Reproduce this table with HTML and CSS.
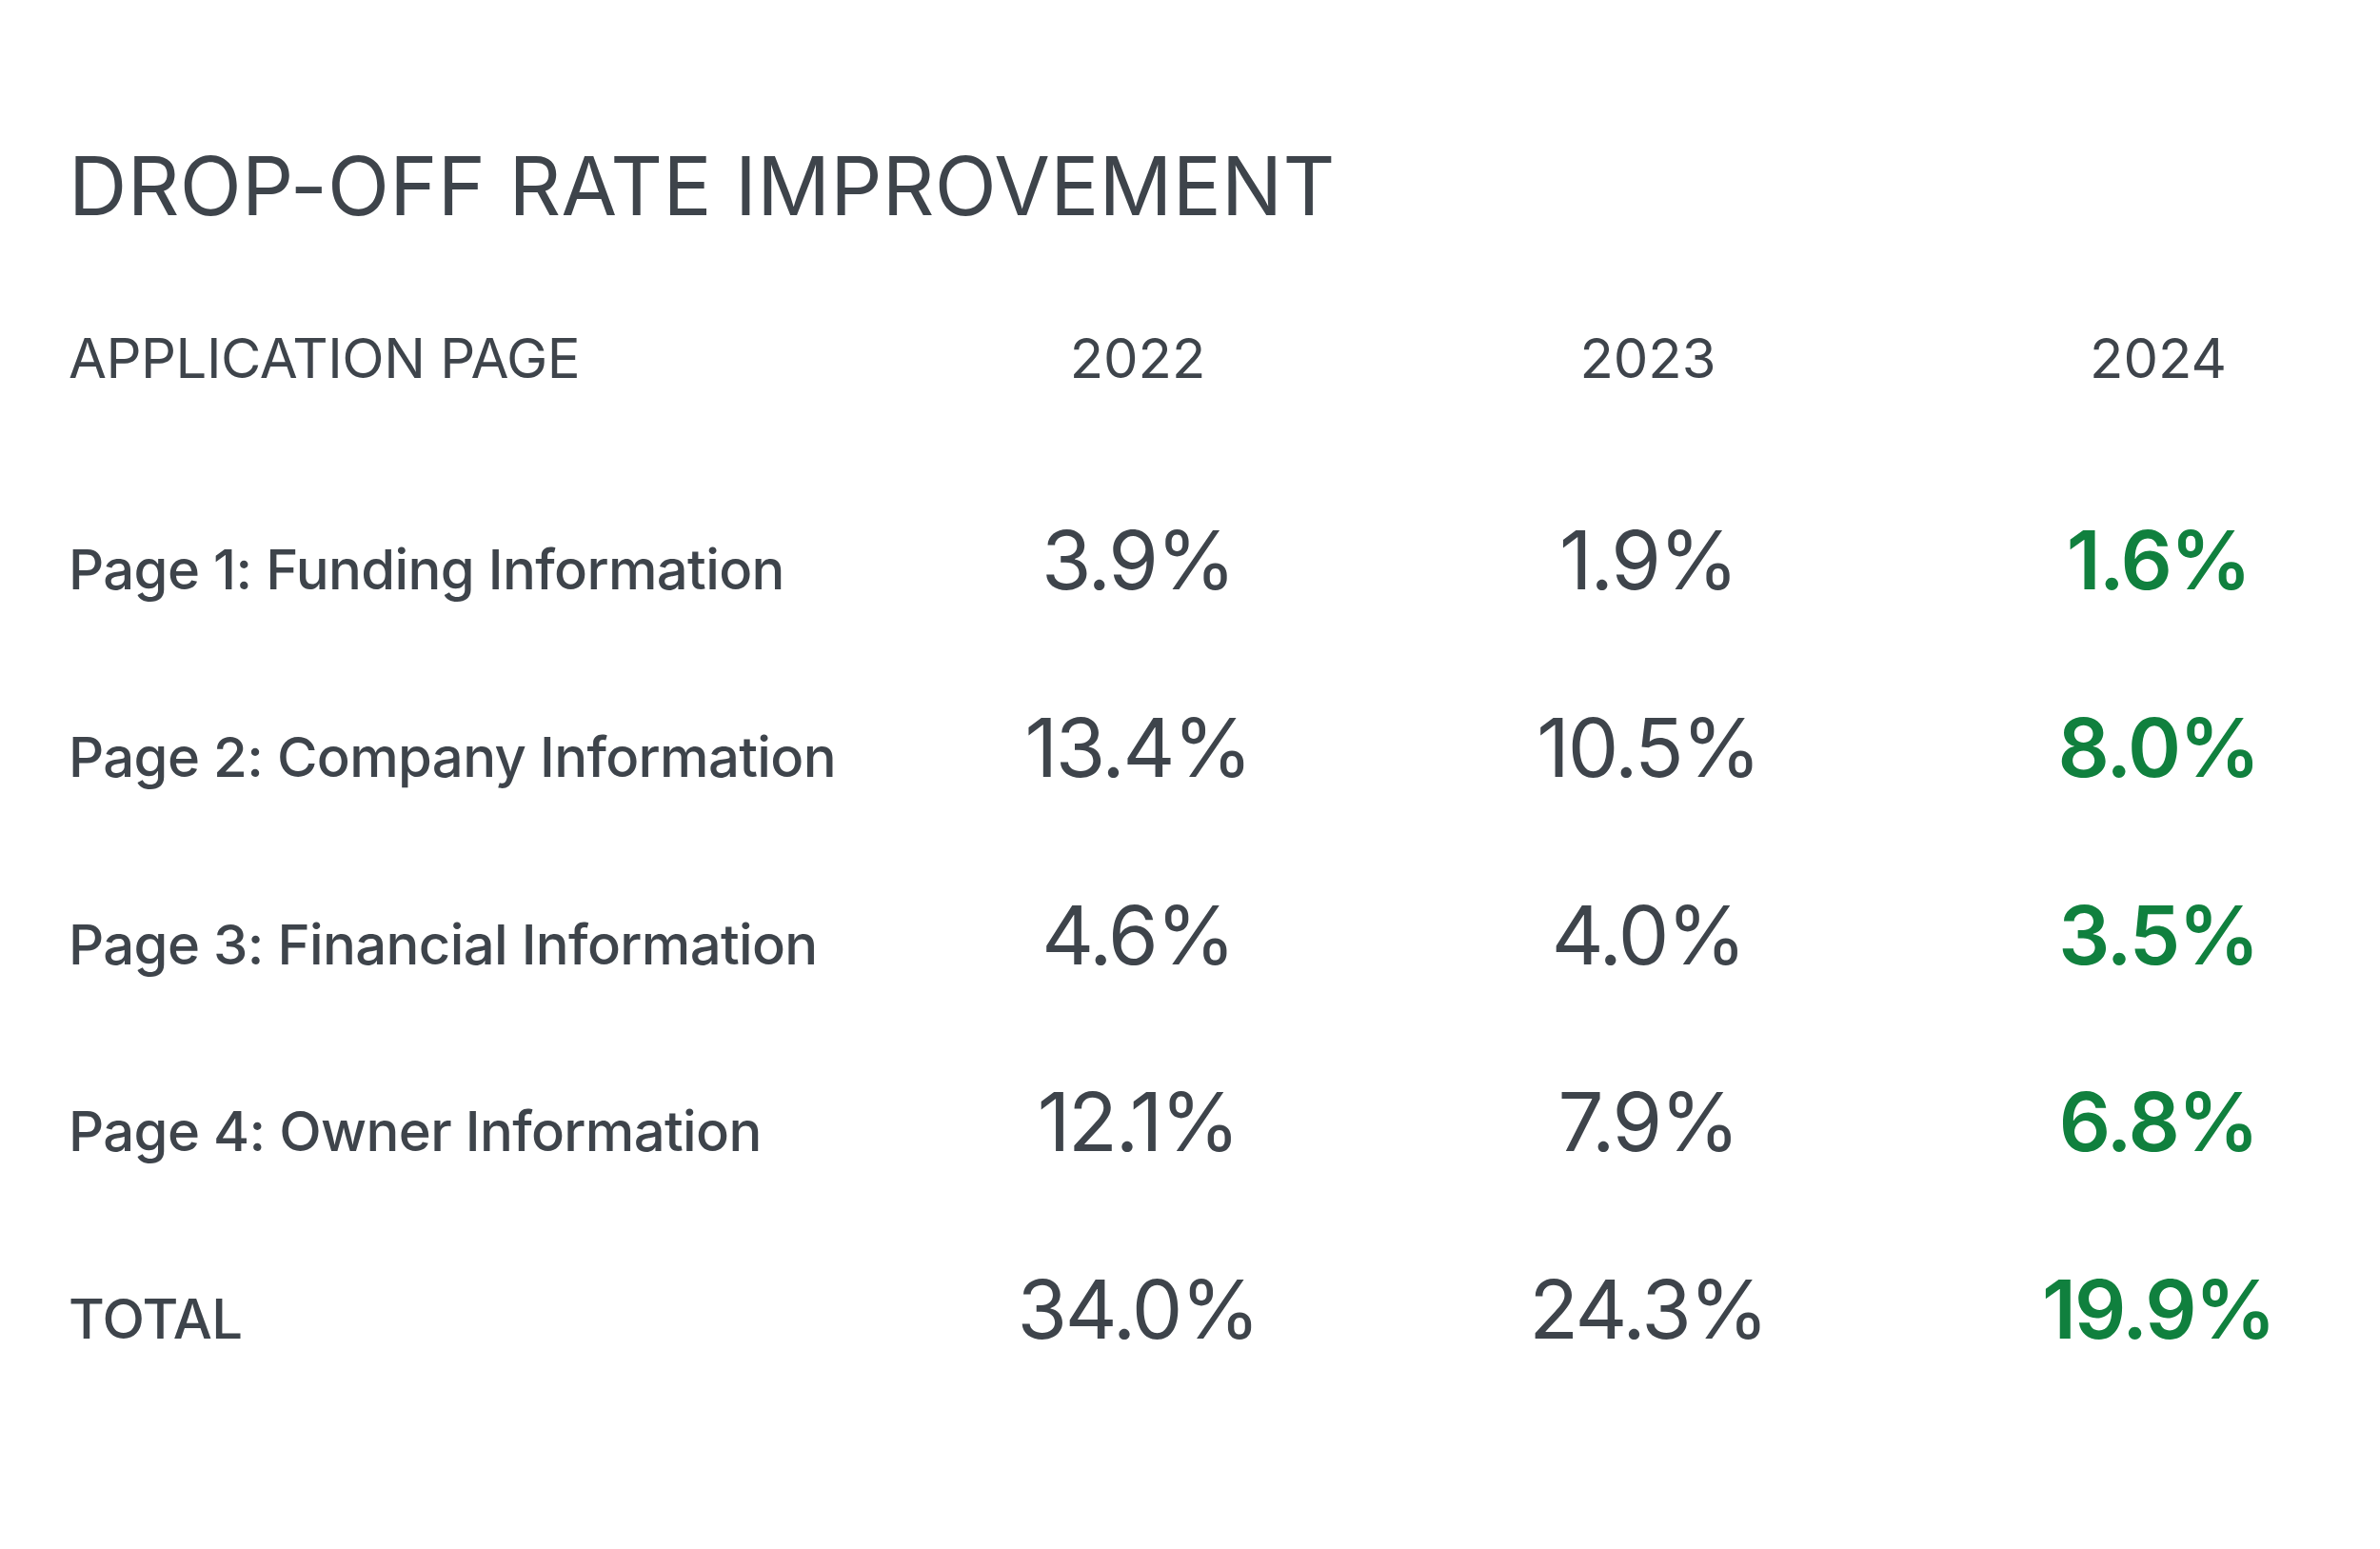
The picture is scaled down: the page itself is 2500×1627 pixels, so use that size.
FILE: index.html
```html
<!DOCTYPE html>
<html lang="en">
<head>
<meta charset="utf-8">
<title>Drop-off Rate Improvement</title>
<link rel="stylesheet" href="styles.css">
</head>
<body>
<main class="page">
  <h1 class="title">DROP-OFF RATE IMPROVEMENT</h1>
  <div class="row head">
    <div class="label">APPLICATION PAGE</div>
    <div class="year">2022</div>
    <div class="year">2023</div>
    <div class="year">2024</div>
  </div>
  <div class="rows">
    <div class="row">
      <div class="label">Page 1: Funding Information</div>
      <div class="val">3.9%</div>
      <div class="val">1.9%</div>
      <div class="val best">1.6%</div>
    </div>
    <div class="row">
      <div class="label">Page 2: Company Information</div>
      <div class="val">13.4%</div>
      <div class="val">10.5%</div>
      <div class="val best">8.0%</div>
    </div>
    <div class="row">
      <div class="label">Page 3: Financial Information</div>
      <div class="val">4.6%</div>
      <div class="val">4.0%</div>
      <div class="val best">3.5%</div>
    </div>
    <div class="row">
      <div class="label">Page 4: Owner Information</div>
      <div class="val">12.1%</div>
      <div class="val">7.9%</div>
      <div class="val best">6.8%</div>
    </div>
    <div class="row">
      <div class="label">TOTAL</div>
      <div class="val">34.0%</div>
      <div class="val">24.3%</div>
      <div class="val best">19.9%</div>
    </div>
  </div>
</main>
</body>
</html>
```

FILE: styles.css
```css
html, body {
  margin: 0;
  padding: 0;
  background: #ffffff;
}
body {
  font-family: "Inter", "Noto Sans", "Liberation Sans", sans-serif;
  color: #3e444b;
  overflow: hidden;
}
.page {
  padding: 144px 0 0 72px;
}
.title {
  margin: 0;
  font-size: 85px;
  line-height: 104px;
  font-weight: 400;
  letter-spacing: 0.3px;
}
.row {
  display: grid;
  grid-template-columns: 787px 400px 400px 400px;
  column-gap: 136px;
  align-items: baseline;
}
.head {
  margin-top: 93px;
  font-size: 58px;
  line-height: 70px;
}
.rows {
  margin-top: 126px;
  display: flex;
  flex-direction: column;
  row-gap: 92.75px;
}
.label {
  white-space: nowrap;
  font-size: 58px;
  line-height: 70px;
  font-weight: 500;
  letter-spacing: -0.65px;
}
.head .label {
  font-weight: 400;
  letter-spacing: -0.5px;
}
.year {
  text-align: center;
  font-size: 58px;
  line-height: 70px;
}
.val {
  text-align: center;
  font-size: 85px;
  line-height: 104px;
  font-weight: 400;
  letter-spacing: -2.2px;
}
.val.best {
  color: #10803e;
  font-weight: 600;
  letter-spacing: -2px;
}
```
